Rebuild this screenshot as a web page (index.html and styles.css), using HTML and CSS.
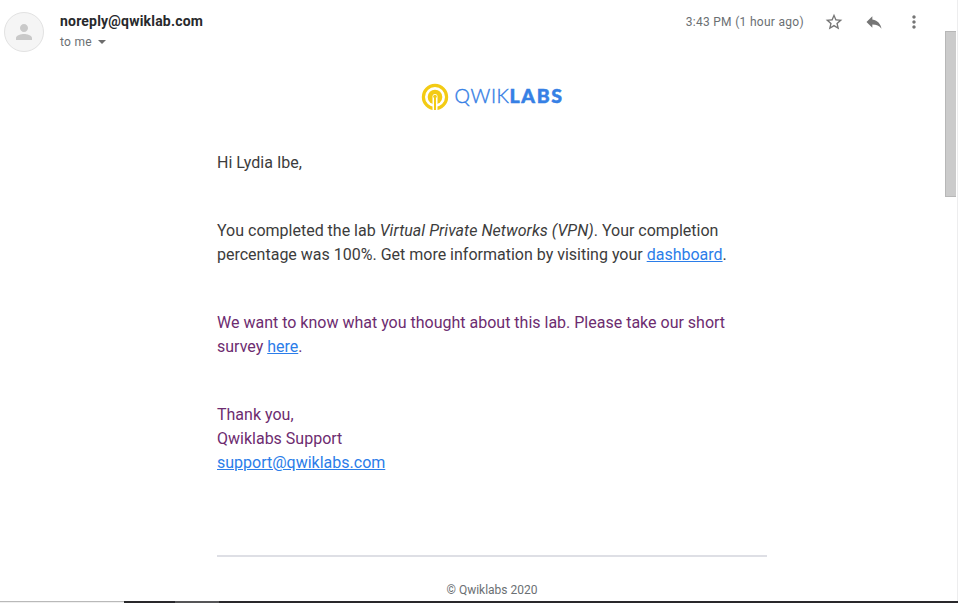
FILE: index.html
```html
<!DOCTYPE html>
<html lang="en">
<head>
<meta charset="utf-8">
<title>Lab completed</title>
<link rel="stylesheet" href="styles.css">
</head>
<body>
<div class="window">
  <div class="message">
    <header class="header">
      <div class="avatar">
        <svg width="24" height="24" viewBox="0 0 24 24" fill="#c9c9c9"><path d="M12 12c2.21 0 4-1.79 4-4s-1.79-4-4-4-4 1.79-4 4 1.79 4 4 4zm0 2c-2.67 0-8 1.34-8 4v2h16v-2c0-2.66-5.33-4-8-4z"/></svg>
      </div>
      <div class="sender">
        <div class="address">noreply@qwiklab.com</div>
        <div class="recipient">to me <span class="caret"></span></div>
      </div>
      <div class="time">3:43 PM (1 hour ago)</div>
      <div class="actions">
        <svg width="20" height="20" viewBox="0 0 24 24" fill="#757575"><path d="M22 9.24l-7.19-.62L12 2 9.19 8.63 2 9.24l5.46 4.73L5.82 21 12 17.27 18.18 21l-1.63-7.03L22 9.24zM12 15.4l-3.76 2.27 1-4.28-3.32-2.88 4.38-.38L12 6.1l1.71 4.04 4.38.38-3.32 2.88 1 4.28L12 15.4z"/></svg>
        <svg width="20" height="20" viewBox="0 0 24 24" fill="#757575"><path d="M10 9V5l-7 7 7 7v-4.100c5 0 8.500 1.600 11 5.100-1-5-4-10-11-11z"/></svg>
        <svg width="20" height="20" viewBox="0 0 24 24" fill="#757575"><path d="M12 8c1.100 0 2-.9 2-2s-.9-2-2-2-2 .9-2 2 .9 2 2 2zm0 2c-1.100 0-2 .9-2 2s.9 2 2 2 2-.9 2-2-.9-2-2-2zm0 6c-1.100 0-2 .9-2 2s.9 2 2 2 2-.9 2-2-.9-2-2-2z"/></svg>
      </div>
    </header>
    <main class="content">
      <svg class="logo" width="142" height="28" viewBox="0 0 142 28">
        <circle cx="14" cy="14" r="11.600" fill="none" stroke="#f3cb14" stroke-width="3.200"/>
        <circle cx="14" cy="14" r="7.300" fill="#f3cb14"/>
        <path d="M11.500 28V13.500a2.500 2.500 0 0 1 5 0V28z" fill="#fff"/>
        <circle cx="14" cy="13.500" r="1.800" fill="#f3cb14"/>
        <path d="M13 13h2v14h-2z" fill="#f3cb14"/>
        <text class="logo-thin" x="33.500" y="20" textLength="54.500" lengthAdjust="spacing">QWIK</text>
        <text class="logo-bold" x="88.500" y="20" textLength="52.500" lengthAdjust="spacing">LABS</text>
      </svg>
      <p>Hi Lydia Ibe,</p>
      <p>You completed the lab <em>Virtual Private Networks (VPN)</em>. Your completion percentage was 100%. Get more information by visiting your <a href="#">dashboard</a>.</p>
      <p class="visited">We want to know what you thought about this lab. Please take our short survey <a href="#">here</a>.</p>
      <p class="visited">Thank you,<br>Qwiklabs Support<br><a href="#">support@qwiklabs.com</a></p>
      <footer class="copyright">© Qwiklabs 2020</footer>
    </main>
  </div>
  <div class="scrollbar"><div class="thumb"></div></div>
  <div class="taskbar"><div class="status"></div><div class="dark"></div><div class="active"></div><div class="dark grow"></div></div>
</div>
</body>
</html>
```
FILE: styles.css
```css
* { box-sizing: border-box; }
body { margin: 0; background: #fff; font-family: Roboto, "Liberation Sans", sans-serif; overflow: hidden; }
svg { display: block; }
.window { display: grid; grid-template-columns: 1fr 13px; grid-template-rows: 601px 2px; width: 958px; height: 603px; }
.header { display: flex; height: 83px; padding: 12px 0 0 4px; }
.avatar { display: flex; align-items: center; justify-content: center; width: 40px; height: 40px; border: 1px solid #e2e2e2; border-radius: 50%; background: #f5f5f5; }
.sender { flex: 1; margin-left: 16px; }
.address { padding-bottom: 2px; font-size: 14px; font-weight: 700; line-height: 18px; letter-spacing: .2px; color: #28292c; }
.recipient { display: flex; align-items: center; font-size: 12px; line-height: 20px; letter-spacing: .3px; color: #6b6f73; }
.caret { margin-left: 6px; border: 4px solid transparent; border-top-color: #6d6d6d; border-bottom: 0; }
.time { font-size: 12px; line-height: 20px; letter-spacing: .3px; color: #6b6f73; }
.actions { display: flex; gap: 20px; margin: 0 21px 0 20px; }
.content { width: 550px; margin-left: 217px; font-size: 16px; line-height: 24px; color: #3c3c3c; }
.logo { margin: 0 0 40px 204px; }
.logo-thin, .logo-bold { font-family: Lato, sans-serif; font-size: 19.5px; fill: #3680e5; stroke: #3680e5; }
.logo-thin { font-weight: 300; stroke-width: .4px; }
.logo-bold { font-weight: 900; stroke-width: .5px; }
p { margin: 0 0 44px; }
em { letter-spacing: .05px; }
a { color: #2b7de9; text-decoration: underline; }
.visited { color: #6d2c70; }
.copyright { margin-top: 80px; padding-top: 21px; border-top: 2px solid #dedfe5; text-align: center; font-size: 12px; color: #6b6f73; }
.scrollbar { padding-top: 31px; border-right: 1px solid #ededee; }
.thumb { width: 11px; height: 166px; border: 1px solid #b7b7b7; border-right: 0; background: #cbcbcb; }
.taskbar { grid-column: 1 / -1; display: flex; }
.status { width: 124px; border-top: 1px solid #b9b9b9; background: #f0f0f0; }
.dark { width: 51px; background: #29282b; }
.active { width: 44px; background: #555557; }
.grow { flex: 1; }
```
